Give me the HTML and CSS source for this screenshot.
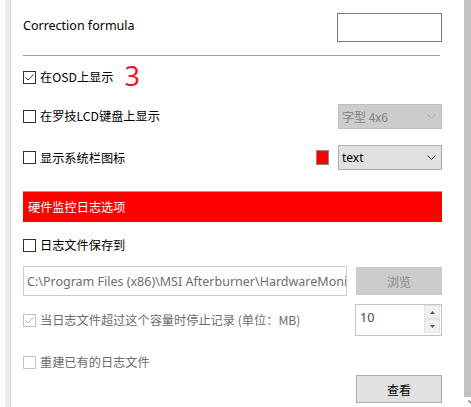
FILE: index.html
```html
<!DOCTYPE html>
<html lang="zh-CN">
<head>
<meta charset="utf-8">
<link rel="stylesheet" href="styles.css">
</head>
<body>
<div class="window">
  <div class="gutter"><div class="gutter-shade"></div><div class="gutter-line"></div></div>
  <div class="content">
    <div class="row row-corr">
      <span class="label latin">Correction formula</span>
      <div class="textbox"></div>
    </div>
    <div class="divider"></div>
    <div class="row row-osd">
      <span class="check checked"><svg viewBox="0 0 13 13" width="13" height="13"><path d="M2.5 6.5 L5 9 L10.5 3.5" fill="none" stroke="#333" stroke-width="1"/></svg></span>
      <span class="label">在OSD上显示</span>
      <span class="big-num">3</span>
    </div>
    <div class="row row-lcd">
      <span class="check"></span>
      <span class="label">在罗技LCD键盘上显示</span>
      <div class="select select-disabled"><span>字型 4x6</span><svg class="chev" viewBox="0 0 9 5" width="9" height="5"><path d="M0.5 0.5 L4.5 4.5 L8.5 0.5" fill="none" stroke="#a8a8a8" stroke-width="1"/></svg></div>
    </div>
    <div class="row row-tray">
      <span class="check"></span>
      <span class="label">显示系统栏图标</span>
      <span class="swatch"></span>
      <div class="select"><span class="latin">text</span><svg class="chev" viewBox="0 0 9 5" width="9" height="5"><path d="M0.5 0.5 L4.5 4.5 L8.5 0.5" fill="none" stroke="#333" stroke-width="1"/></svg></div>
    </div>
    <div class="section-bar">硬件监控日志选项</div>
    <div class="row row-log">
      <span class="check"></span>
      <span class="label">日志文件保存到</span>
    </div>
    <div class="row row-path">
      <div class="pathbox"><span>C:\Program Files (x86)\MSI Afterburner\HardwareMoni</span></div>
      <div class="btn btn-disabled">浏览</div>
    </div>
    <div class="row row-limit">
      <span class="check disabled"><svg viewBox="0 0 13 13" width="13" height="13"><path d="M2.5 6.5 L5 9 L10.5 3.5" fill="none" stroke="#b5b5b5" stroke-width="1"/></svg></span>
      <span class="label muted">当日志文件超过这个容量时停止记录 (单位：MB)</span>
      <div class="spin">
        <span class="spin-val latin">10</span>
        <div class="spin-btns">
          <div class="spin-btn"><svg viewBox="0 0 5 3" width="5" height="3"><path d="M0 3 L2.5 0 L5 3 Z" fill="#555"/></svg></div>
          <div class="spin-btn"><svg viewBox="0 0 5 3" width="5" height="3"><path d="M0 0 L2.5 3 L5 0 Z" fill="#555"/></svg></div>
        </div>
      </div>
    </div>
    <div class="row row-rebuild">
      <span class="check disabled"></span>
      <span class="label muted">重建已有的日志文件</span>
    </div>
    <div class="row row-view">
      <div class="btn">查看</div>
    </div>
  </div>
  <div class="scrollbar">
    <div class="thumb"></div>
    <div class="scroll-arrow"><svg viewBox="0 0 7 4" width="7" height="4"><path d="M0.5 0.5 L3.5 3.5 L6.5 0.5" fill="none" stroke="#666" stroke-width="1.2"/></svg></div>
  </div>
</div>
</body>
</html>
```
FILE: styles.css
```css
html, body {
  margin: 0;
  padding: 0;
  background: #ffffff;
}
body {
  font-family: "Noto Sans", "Noto Sans CJK SC", sans-serif;
  font-size: 12px;
  color: #000;
}
.window {
  display: flex;
  width: 471px;
  height: 407px;
  overflow: hidden;
}
.gutter {
  width: 11px;
  flex: none;
  display: flex;
  justify-content: flex-end;
}
.gutter-shade {
  width: 5px;
  background: #ededed;
}
.gutter-line {
  width: 1px;
  background: #d6d6d6;
}
.content {
  flex: none;
  width: 419px;
  padding: 0 11px 0 12px;
  display: flex;
  flex-direction: column;
}
.row {
  display: flex;
  align-items: center;
  flex: none;
}
.label {
  font-family: "Noto Sans CJK SC", sans-serif;
  font-size: 12.2px;
  white-space: nowrap;
}
.latin {
  font-family: "Noto Sans", "Noto Sans CJK SC", sans-serif;
}
.muted { color: #6d6d6d; }
.row-corr {
  margin-top: 13px;
  height: 29px;
  justify-content: space-between;
}
.row-corr .label { margin-top: -4px; font-size: 12.5px; }
.textbox {
  width: 103px;
  height: 27px;
  border: 1px solid #7a7a7a;
  background: #fff;
}
.divider {
  margin-top: 13px;
  height: 1px;
  width: 417px;
  background: #a0a0a0;
  flex: none;
}
.check {
  width: 11px;
  height: 11px;
  border: 1px solid #333;
  background: #fff;
  flex: none;
  margin-right: 4px;
  position: relative;
}
.check svg {
  position: absolute;
  left: -1px;
  top: -1px;
}
.check.disabled {
  border-color: #c4c4c4;
}
.row-osd { margin-top: 6px; height: 30px; }
.big-num {
  font-family: "Noto Sans", sans-serif;
  font-size: 27px;
  color: #f5141e;
  margin-left: 11px;
  line-height: 1;
  margin-top: -4px;
}
.row-lcd { margin-top: 12px; height: 24px; }
.select {
  margin-left: auto;
  height: 23px;
  border: 1px solid #adadad;
  background: #e1e1e1;
  display: flex;
  align-items: center;
  justify-content: space-between;
  padding: 0 5px 0 3px;
  box-sizing: content-box;
  width: 94px;
}
.select-disabled {
  background: #cccccc;
  border-color: #bfbfbf;
  color: #838383;
}
.select-disabled span { font-family: "Noto Sans CJK SC", sans-serif; }
.row-tray { margin-top: 17px; height: 25px; }
.swatch {
  margin-left: auto;
  width: 11px;
  height: 13px;
  background: #ff0000;
  border: 1px solid #8a8a8a;
  margin-right: 9px;
}
.row-tray .select { margin-left: 0; }
.section-bar {
  margin-top: 21px;
  height: 30px;
  border-top: 1px solid #a0a0a0;
  background: #ff0000;
  color: #fff;
  font-family: "Noto Sans CJK SC", sans-serif;
  font-size: 12.2px;
  display: flex;
  align-items: center;
  padding-left: 5px;
  flex: none;
  width: 414px;
}
.row-log { margin-top: 15px; height: 16px; }
.row-path {
  margin-top: 13px;
  height: 30px;
  justify-content: space-between;
}
.pathbox {
  border: 1px solid #cccccc;
  color: #6d6d6d;
  overflow: hidden;
  display: flex;
  align-items: center;
  padding-left: 3px;
  box-sizing: border-box;
  width: 324px;
  height: 30px;
  white-space: nowrap;
}
.pathbox span { font-family: "Noto Sans", sans-serif; font-size: 12.5px; }
.btn {
  width: 84px;
  height: 26px;
  border: 1px solid #adadad;
  background: #e1e1e1;
  display: flex;
  align-items: center;
  justify-content: center;
  font-family: "Noto Sans CJK SC", sans-serif;
}
.btn-disabled {
  background: #cccccc;
  border-color: #cccccc;
  color: #8a8a8a;
}
.row-limit { margin-top: 8px; height: 32px; }
.spin {
  margin-left: auto;
  width: 85px;
  height: 30px;
  border: 1px solid #c4c4c4;
  display: flex;
  justify-content: space-between;
}
.spin-val {
  padding: 4px 0 0 4px;
  color: #444;
  font-size: 12.5px;
}
.spin-btns {
  width: 16px;
  display: flex;
  flex-direction: column;
  padding: 0 1px 2px 0;
}
.spin-btn {
  flex: 1;
  background: #f0f0f0;
  border: 1px solid #e2e2e2;
  display: flex;
  align-items: center;
  justify-content: center;
}
.row-rebuild { margin-top: 18px; height: 16px; }
.row-view {
  margin-top: 5px;
  height: 28px;
  justify-content: flex-end;
}
.scrollbar {
  flex: none;
  width: 18px;
  margin-left: 11px;
  display: flex;
  flex-direction: column;
  border-right: 1px solid #e6e6e6;
  box-sizing: border-box;
  padding-right: 2px;
}
.thumb {
  height: 397px;
  background: #c2c2c2;
  flex: none;
}
.scroll-arrow {
  display: flex;
  justify-content: center;
  padding-top: 3px;
}
```
